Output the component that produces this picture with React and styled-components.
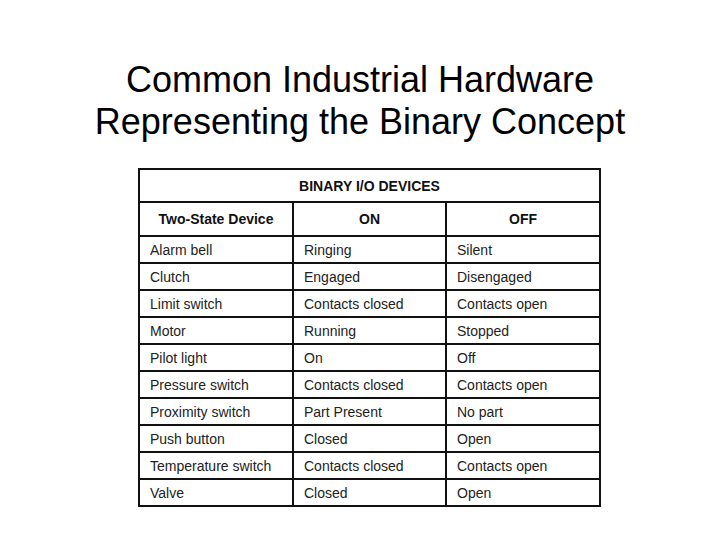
import styled, { createGlobalStyle } from 'styled-components';

const GlobalStyle = createGlobalStyle`
  html, body {
    margin: 0;
    padding: 0;
    background: #ffffff;
  }
  body {
    font-family: 'Liberation Sans', Arial, sans-serif;
  }
`;

const Slide = styled.div`
  width: 720px;
  height: 540px;
  overflow: hidden;
  background: #ffffff;
`;

const Title = styled.h1`
  margin: 0;
  padding-top: 59px;
  font-weight: 400;
  font-size: 36px;
  line-height: 42px;
  text-align: center;
  color: #000;
`;

const TableWrap = styled.div`
  margin: 25px 0 0 138px;
  width: 461px;
`;

const Table = styled.table`
  width: 100%;
  border-collapse: collapse;
  border: 2px solid #111;
  table-layout: fixed;
  font-size: 14px;
  color: #1a1a1a;
`;

const Cell = styled.td`
  border: 2px solid #111;
  height: ${(props) => props.h || 25}px;
  padding: 0 0 0 ${(props) => (props.center ? 0 : 10)}px;
  text-align: ${(props) => (props.center ? 'center' : 'left')};
  font-weight: ${(props) => (props.bold ? 700 : 400)};
  color: ${(props) => (props.bold ? '#111' : '#222')};
  vertical-align: middle;
  white-space: nowrap;
`;

const rows = [
  ['Alarm bell', 'Ringing', 'Silent'],
  ['Clutch', 'Engaged', 'Disengaged'],
  ['Limit switch', 'Contacts closed', 'Contacts open'],
  ['Motor', 'Running', 'Stopped'],
  ['Pilot light', 'On', 'Off'],
  ['Pressure switch', 'Contacts closed', 'Contacts open'],
  ['Proximity switch', 'Part Present', 'No part'],
  ['Push button', 'Closed', 'Open'],
  ['Temperature switch', 'Contacts closed', 'Contacts open'],
  ['Valve', 'Closed', 'Open'],
];

const App = () => {
  return (
    <Slide>
      <GlobalStyle />
      <Title>
        Common Industrial Hardware
        <br />
        Representing the Binary Concept
      </Title>
      <TableWrap>
        <Table>
          <colgroup>
            <col style={{ width: 154 }} />
            <col style={{ width: 153 }} />
            <col style={{ width: 154 }} />
          </colgroup>
          <tbody>
            <tr>
              <Cell colSpan={3} center bold h={31}>
                BINARY I/O DEVICES
              </Cell>
            </tr>
            <tr>
              <Cell center bold h={32}>Two-State Device</Cell>
              <Cell center bold h={32}>ON</Cell>
              <Cell center bold h={32}>OFF</Cell>
            </tr>
            {rows.map((r) => (
              <tr key={r[0]}>
                <Cell>{r[0]}</Cell>
                <Cell>{r[1]}</Cell>
                <Cell>{r[2]}</Cell>
              </tr>
            ))}
          </tbody>
        </Table>
      </TableWrap>
    </Slide>
  );
};

export default App;
